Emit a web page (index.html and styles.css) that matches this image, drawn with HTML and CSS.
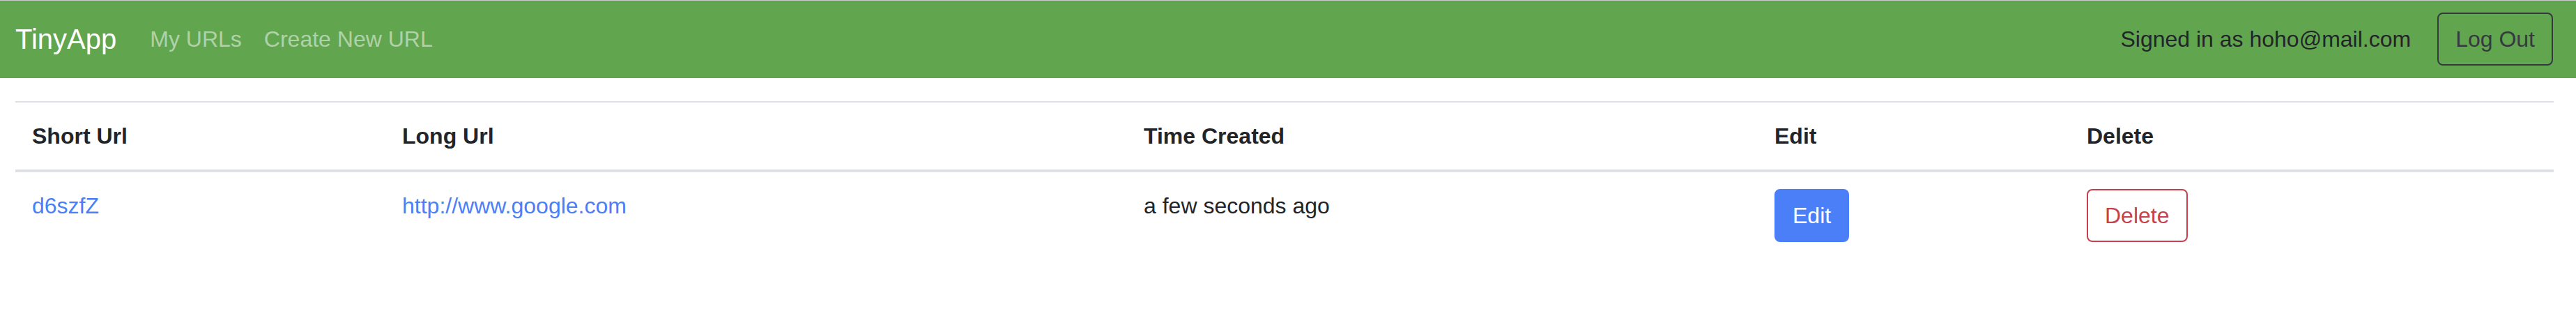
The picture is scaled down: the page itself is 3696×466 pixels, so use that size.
FILE: index.html
```html
<!DOCTYPE html>
<html lang="en">
<head>
<meta charset="utf-8">
<title>TinyApp</title>
<link rel="stylesheet" href="styles.css">
</head>
<body>
<nav class="navbar">
  <a class="brand" href="#">TinyApp</a>
  <ul class="nav">
    <li><a class="nav-link" href="#">My URLs</a></li>
    <li><a class="nav-link" href="#">Create New URL</a></li>
  </ul>
  <div class="nav-right">
    <span class="navbar-text">Signed in as hoho@mail.com</span>
    <button class="btn btn-outline-dark" type="button">Log Out</button>
  </div>
</nav>
<main class="content">
  <table class="table">
    <thead>
      <tr>
        <th class="col-short">Short Url</th>
        <th class="col-long">Long Url</th>
        <th class="col-time">Time Created</th>
        <th class="col-edit">Edit</th>
        <th class="col-delete">Delete</th>
      </tr>
    </thead>
    <tbody>
      <tr>
        <td><a class="link" href="#">d6szfZ</a></td>
        <td><a class="link" href="#">http://www.google.com</a></td>
        <td>a few seconds ago</td>
        <td><button class="btn btn-primary" type="button">Edit</button></td>
        <td><button class="btn btn-outline-danger" type="button">Delete</button></td>
      </tr>
    </tbody>
  </table>
</main>
</body>
</html>
```
FILE: styles.css
```css
* {
  box-sizing: border-box;
}

html, body {
  margin: 0;
  padding: 0;
  background: #ffffff;
}

body {
  font-family: "Liberation Sans", Arial, sans-serif;
  font-size: 32px;
  line-height: 1.5;
  color: #212529;
}

a {
  text-decoration: none;
}

.navbar {
  display: flex;
  align-items: center;
  height: 112px;
  padding: 15px 33px 16px 22px;
  background: #62a54f;
  border-top: 1px solid #c9c9c9;
}

.brand {
  color: #ffffff;
  font-size: 40px;
  line-height: 60px;
  padding: 10px 0;
  margin-right: 32px;
  white-space: nowrap;
}

.nav {
  display: flex;
  list-style: none;
  margin: 0;
  padding: 0;
}

.nav-link {
  display: block;
  padding: 16px 16px;
  color: rgba(255, 255, 255, 0.5);
  white-space: nowrap;
}

.nav-right {
  margin-left: auto;
  display: flex;
  align-items: center;
  gap: 38px;
}

.navbar-text {
  color: #212529;
  padding: 16px 0;
  white-space: nowrap;
}

.btn {
  display: inline-block;
  font-family: inherit;
  font-size: 32px;
  line-height: 48px;
  padding: 12px 24px;
  border: 2px solid transparent;
  border-radius: 8px;
  background: transparent;
  cursor: pointer;
  white-space: nowrap;
}

.btn-outline-dark {
  color: #343a40;
  border-color: #343a40;
}

.btn-primary {
  color: #ffffff;
  background: #4a7ff7;
  border-color: #4a7ff7;
}

.btn-outline-danger {
  color: #c6414c;
  border-color: #c6414c;
  background: #ffffff;
}

.content {
  padding: 33px 32px 0 22px;
}

.table {
  width: 100%;
  border-collapse: collapse;
  table-layout: fixed;
}

.table th,
.table td {
  padding: 24px;
  text-align: left;
  border-top: 2px solid #dee2e6;
}

.table th {
  font-weight: 700;
  vertical-align: bottom;
  border-bottom: 4px solid #dee2e6;
}

.table td {
  vertical-align: top;
}

.col-short { width: 531px; }
.col-long { width: 1064px; }
.col-time { width: 905px; }
.col-edit { width: 448px; }
.col-delete { width: 694px; }

.link {
  color: #4a7ff7;
}
```
